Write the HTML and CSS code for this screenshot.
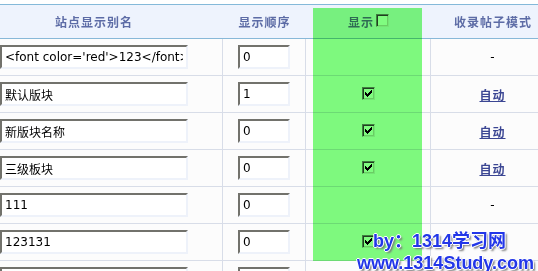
FILE: index.html
```html
<!DOCTYPE html>
<html lang="zh-CN">

<head>
    <meta charset="UTF-8">
    <title>版块设置</title>
    <link rel="stylesheet" href="styles.css">
</head>

<body>

    <div class="board">
        <div class="forum-grid">
            <!-- Header -->
            <div class="head">站点显示别名</div>
            <div class="head">显示顺序</div>
            <div class="head">显示 <span class="chk"></span></div>
            <div class="head">收录帖子模式</div>

            <!-- Row 1 -->
            <div class="cell cell-name"><input class="name-input" type="text" value="<font color='red'>123</font>"></div>
            <div class="cell"><input class="order-input" type="text" value="0"></div>
            <div class="cell"></div>
            <div class="cell">-</div>

            <!-- Row 2 -->
            <div class="cell cell-name"><input class="name-input" type="text" value="默认版块"></div>
            <div class="cell"><input class="order-input" type="text" value="1"></div>
            <div class="cell">
                <span class="chk"><svg width="7" height="7" viewBox="0 0 7 7"><path d="M0 2h1v3H0zM1 3h1v3H1zM2 4h1v3H2zM3 3h1v3H3zM4 2h1v3H4zM5 1h1v3H5zM6 0h1v3H6z" /></svg></span>
            </div>
            <div class="cell"><a class="mode-link" href="#">自动</a></div>

            <!-- Row 3 -->
            <div class="cell cell-name"><input class="name-input" type="text" value="新版块名称"></div>
            <div class="cell"><input class="order-input" type="text" value="0"></div>
            <div class="cell">
                <span class="chk"><svg width="7" height="7" viewBox="0 0 7 7"><path d="M0 2h1v3H0zM1 3h1v3H1zM2 4h1v3H2zM3 3h1v3H3zM4 2h1v3H4zM5 1h1v3H5zM6 0h1v3H6z" /></svg></span>
            </div>
            <div class="cell"><a class="mode-link" href="#">自动</a></div>

            <!-- Row 4 -->
            <div class="cell cell-name"><input class="name-input" type="text" value="三级板块"></div>
            <div class="cell"><input class="order-input" type="text" value="0"></div>
            <div class="cell">
                <span class="chk"><svg width="7" height="7" viewBox="0 0 7 7"><path d="M0 2h1v3H0zM1 3h1v3H1zM2 4h1v3H2zM3 3h1v3H3zM4 2h1v3H4zM5 1h1v3H5zM6 0h1v3H6z" /></svg></span>
            </div>
            <div class="cell"><a class="mode-link" href="#">自动</a></div>

            <!-- Row 5 -->
            <div class="cell cell-name"><input class="name-input" type="text" value="111"></div>
            <div class="cell"><input class="order-input" type="text" value="0"></div>
            <div class="cell"></div>
            <div class="cell">-</div>

            <!-- Row 6 -->
            <div class="cell cell-name"><input class="name-input" type="text" value="123131"></div>
            <div class="cell"><input class="order-input" type="text" value="0"></div>
            <div class="cell">
                <span class="chk"><svg width="7" height="7" viewBox="0 0 7 7"><path d="M0 2h1v3H0zM1 3h1v3H1zM2 4h1v3H2zM3 3h1v3H3zM4 2h1v3H4zM5 1h1v3H5zM6 0h1v3H6z" /></svg></span>
            </div>
            <div class="cell"></div>

            <!-- Row 7 -->
            <div class="cell cell-name"><input class="name-input" type="text" value=""></div>
            <div class="cell"><input class="order-input" type="text" value=""></div>
            <div class="cell"></div>
            <div class="cell"></div>
        </div>

        <!-- Column highlight -->
        <div class="highlight"></div>

        <!-- Watermark -->
        <div class="watermark">
            <div class="watermark-by">by：1314学习网</div>
            <div>www.1314Study.com</div>
        </div>
    </div>

</body>

</html>
```

FILE: styles.css
```css
/* Basic Reset */
* {
    margin: 0;
    padding: 0;
    box-sizing: border-box;
}

body {
    background: #fff;
    font-family: "DejaVu Sans", "Noto Sans CJK SC", sans-serif;
    font-size: 12px;
    color: #000;
    overflow: hidden;
    height: 271px;
    padding-top: 4px;
}

.board {
    position: relative;
}

/* Table grid */
.forum-grid {
    display: grid;
    grid-template-columns: 258px 83px 125px 124px;
    margin-left: -35px;
    border-top: 1px solid #84b9d9;
    background: #fcfcfc;
}

.head {
    display: flex;
    justify-content: center;
    align-items: center;
    height: 34px;
    background: #eef3fd;
    border-bottom: 1px solid #88b8d8;
    font-family: "Noto Sans CJK SC", sans-serif;
    font-weight: bold;
    letter-spacing: 1px;
    color: #5d6ca6;
}

.head .chk {
    margin-left: 2px;
    margin-bottom: 2px;
}

.cell {
    display: flex;
    justify-content: center;
    align-items: center;
    height: 37px;
    border-right: 1px solid #d8dde8;
    border-bottom: 1px solid #d8dde8;
}

.cell-name {
    justify-content: flex-start;
    padding-left: 35px;
}

/* Inputs */
.name-input,
.order-input {
    height: 24px;
    border: 2px solid;
    border-color: #72726c #eef2fa #eef2fa #72726c;
    padding: 0 3px;
    font-family: "DejaVu Sans", "Noto Sans CJK SC", sans-serif;
    font-size: 12px;
    color: #000;
    background: #fff;
    outline: none;
}

.name-input {
    width: 188px;
}

.order-input {
    width: 52px;
}

/* Classic checkbox */
.chk {
    display: inline-flex;
    justify-content: center;
    align-items: center;
    width: 13px;
    height: 13px;
    margin-bottom: 2px;
    border: 1px solid;
    border-color: #808080 #e8e8e8 #e8e8e8 #808080;
    box-shadow: inset 1px 1px 0 #404040, inset -1px -1px 0 #d4d0c8;
    background: #fff;
}

.chk svg {
    fill: #000;
    margin: 1px 0 0 1px;
}

.mode-link {
    font-family: "Noto Sans CJK SC", sans-serif;
    font-weight: bold;
    letter-spacing: 1px;
    color: #3b4693;
    text-decoration: underline;
}

/* Green column highlight */
.highlight {
    position: absolute;
    left: 313px;
    top: 4px;
    width: 109px;
    height: 253px;
    background: #80fc80;
    mix-blend-mode: multiply;
}

/* Watermark */
.watermark {
    position: absolute;
    left: 357px;
    top: 226px;
    font-family: "Liberation Sans", "Noto Sans CJK SC", sans-serif;
    font-size: 18px;
    font-weight: bold;
    line-height: 22px;
    color: #2236e8;
    text-shadow: 1px 0 0 #fff, -1px 0 0 #fff, 0 1px 0 #fff, 0 -1px 0 #fff, 2px 2px 2px #777;
    white-space: nowrap;
}

.watermark-by {
    padding-left: 16px;
}
```
